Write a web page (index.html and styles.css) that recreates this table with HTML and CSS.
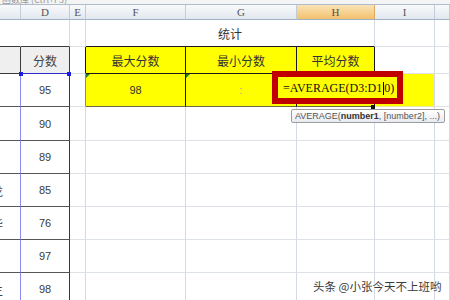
FILE: index.html
```html
<!DOCTYPE html>
<html lang="zh">
<head>
<meta charset="utf-8">
<title>统计</title>
<link rel="stylesheet" href="styles.css">
</head>
<body>
<div class="topbar"><span class="topbar-text">函数库 (Ctrl+F3)</span></div>
<div class="sheet">
  <div class="ch"></div>
  <div class="ch">D</div>
  <div class="ch">E</div>
  <div class="ch">F</div>
  <div class="ch">G</div>
  <div class="ch ch-active">H</div>
  <div class="ch">I</div>
  <div class="ch ch-last"></div>

  <div class="c r1-c"></div>
  <div class="c r1-d"></div>
  <div class="c"></div>
  <div class="c title">统计</div>
  <div class="c"></div>
  <div class="c"></div>

  <div class="c hdr-gray"></div>
  <div class="c hdr-gray hdr-d">分数</div>
  <div class="c e-hdr"></div>
  <div class="c hdr-yellow">最大分数</div>
  <div class="c hdr-yellow">最小分数</div>
  <div class="c hdr-yellow">平均分数</div>
  <div class="c"></div>
  <div class="c"></div>

  <div class="c name"></div>
  <div class="c score">95</div>
  <div class="c e-data"></div>
  <div class="c val-yellow tri">98</div>
  <div class="c val-yellow tri"><span class="faint">:</span></div>
  <div class="c val-yellow"></div>
  <div class="c val-yellow-end"></div>
  <div class="c"></div>

  <div class="c name"></div>
  <div class="c score">90</div>
  <div class="c"></div><div class="c"></div><div class="c"></div><div class="c"></div><div class="c"></div><div class="c"></div>

  <div class="c name"></div>
  <div class="c score">89</div>
  <div class="c"></div><div class="c"></div><div class="c"></div><div class="c"></div><div class="c"></div><div class="c"></div>

  <div class="c name"><span>王小龙</span></div>
  <div class="c score">85</div>
  <div class="c"></div><div class="c"></div><div class="c"></div><div class="c"></div><div class="c"></div><div class="c"></div>

  <div class="c name"><span>赵子华</span></div>
  <div class="c score">76</div>
  <div class="c"></div><div class="c"></div><div class="c"></div><div class="c"></div><div class="c"></div><div class="c"></div>

  <div class="c name"></div>
  <div class="c score">97</div>
  <div class="c"></div><div class="c"></div><div class="c"></div><div class="c"></div><div class="c"></div><div class="c"></div>

  <div class="c name"><span>孙二生</span></div>
  <div class="c score">98</div>
  <div class="c"></div><div class="c"></div><div class="c"></div><div class="c"></div><div class="c"></div><div class="c"></div>
</div>

<div class="dot dot-l"></div>
<div class="dot dot-r"></div>
<div class="editbox">=AVERAGE(D3:D1<span class="caret"></span>0)</div>
<div class="handle"></div>
<div class="tip">AVERAGE(<b>number1</b>, [number2], ...)</div>
<div class="wm">头条 @小张今天不上班哟</div>
</body>
</html>
```

FILE: styles.css
```css
html, body {
  margin: 0;
  padding: 0;
}
body {
  width: 450px;
  height: 300px;
  overflow: hidden;
  position: relative;
  background: #fff;
  font-family: "Liberation Sans", Arial, sans-serif;
}
.topbar {
  height: 4px;
  background: #f4f4f4;
  border-bottom: 1px solid #aebccd;
  overflow: hidden;
}
.topbar-text {
  display: block;
  margin-top: -7px;
  padding-left: 2px;
  font: 9px "Noto Sans CJK SC", sans-serif;
  color: #9a9a9a;
  white-space: nowrap;
}
.sheet {
  display: grid;
  grid-template-columns: 21px 49px 16px 100px 111px 78px 60px 1fr;
  grid-template-rows: 15px 27px 27px 33px 34px 33px 33px 33px 33px 33px;
}
.ch {
  box-sizing: border-box;
  background: linear-gradient(#f8f9fb, #e3e8ef);
  border-right: 1px solid #c3cbd6;
  border-bottom: 1px solid #9fb1c6;
  display: flex;
  align-items: center;
  justify-content: center;
  font: 11px "Liberation Serif", serif;
  color: #555;
}
.ch-active {
  background: linear-gradient(#fbe3b6, #f2c06e);
  border-right-color: #d9aa62;
}
.c {
  box-sizing: border-box;
  border-right: 1px solid #d3d9e5;
  border-bottom: 1px solid #dde1e8;
  display: flex;
  align-items: center;
  justify-content: center;
  font-size: 11px;
  color: #333;
  min-width: 0;
}
.r1-c {
  border-right-color: transparent;
  border-bottom: 1px solid #3a3a3a;
}
.r1-d {
  border-bottom: 1px solid #3a3a3a;
}
.title {
  grid-column: span 3;
  border-bottom: 1px solid #1a1a1a;
  font: 12px "Noto Sans CJK SC", sans-serif;
  color: #333;
}
.hdr-gray {
  background: #efefef;
  border-right: 1px solid #3a3a3a;
  border-bottom: 1px solid #3a3a3a;
  font: 12px "Noto Sans CJK SC", sans-serif;
  color: #444;
}
.hdr-d {
  border-bottom-color: #2a2ad0;
}
.e-hdr {
  border-right: 1px solid #1a1a1a;
}
.e-data {
  border-right-color: #8a8a8a;
}
.hdr-yellow {
  background: #ffff00;
  border-right: 1px solid #1a1a1a;
  border-bottom: 1px solid #1a1a1a;
  font: 12px "Noto Sans CJK SC", sans-serif;
  color: #333;
}
.val-yellow {
  background: #ffff00;
  border-right: 1px solid #1a1a1a;
  border-bottom: 1px solid #6a6a3a;
  position: relative;
  font-size: 11px;
  color: #333;
}
.val-yellow-end {
  background: #ffff00;
  border-bottom-color: #e8e8a0;
}
.tri::before {
  content: "";
  position: absolute;
  left: 0;
  top: 0;
  border-top: 4px solid #2a7a2a;
  border-right: 4px solid transparent;
}
.faint {
  color: #9a9a9a;
  font-size: 10px;
}
.name {
  justify-content: flex-end;
  overflow: hidden;
  padding-right: 17px;
  border-right: 1px solid #8c8cf2;
  border-bottom: 1px solid #555;
  white-space: nowrap;
  font: 12px "Noto Sans CJK SC", sans-serif;
  color: #444;
}
.name span {
  flex: none;
}
.score {
  border-right: 1px solid #2424d0;
  border-bottom: 1px solid #555;
  font-size: 11px;
  color: #3a3a3a;
}
.dot {
  position: absolute;
  width: 4px;
  height: 4px;
  background: #1e1ee0;
  top: 72px;
}
.dot-l { left: 19px; }
.dot-r { left: 67px; }
.editbox {
  position: absolute;
  left: 272px;
  top: 71px;
  width: 131px;
  height: 33px;
  box-sizing: border-box;
  border: 6px solid #c00000;
  background: #ffff00;
  padding: 2px 0 0 5px;
  display: flex;
  align-items: center;
  font: 12px "Liberation Serif", serif;
  color: #111;
  white-space: nowrap;
}
.caret {
  display: inline-block;
  width: 1px;
  height: 13px;
  background: #000;
  margin: 0 0.5px;
}
.handle {
  position: absolute;
  left: 371px;
  top: 105px;
  width: 4px;
  height: 4px;
  background: #111;
}
.tip {
  position: absolute;
  left: 291px;
  top: 109px;
  height: 14px;
  box-sizing: border-box;
  padding: 0 4px 0 3px;
  border: 1px solid #9c9c9c;
  border-radius: 2px;
  background: linear-gradient(#ffffff, #e8ebf1);
  font: 9px "Liberation Sans", Arial, sans-serif;
  line-height: 12px;
  color: #555;
  white-space: nowrap;
}
.tip b {
  color: #333;
}
.wm {
  position: absolute;
  left: 313px;
  top: 278px;
  font: 11.5px "Noto Sans CJK SC", sans-serif;
  color: #3a3a3a;
  white-space: nowrap;
  text-shadow: 0 0 2px #fff, 0 0 2px #fff, 0 0 1px #fff;
}
```
